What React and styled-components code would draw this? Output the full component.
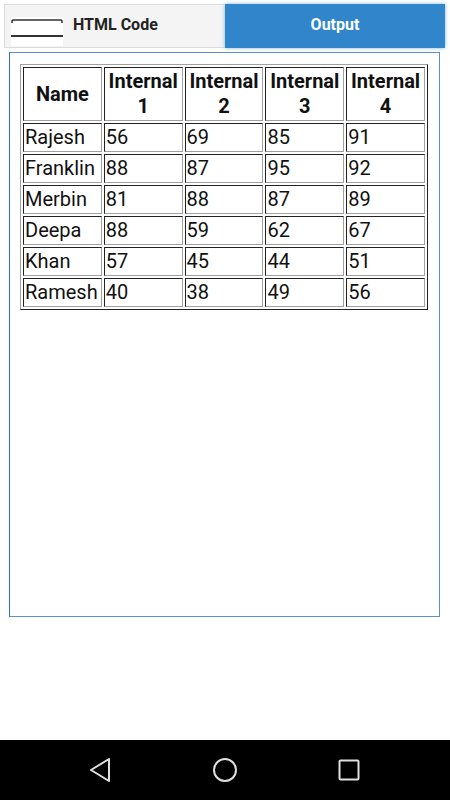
import styled, { createGlobalStyle } from "styled-components";

const GlobalStyle = createGlobalStyle`
  html, body {
    margin: 0;
    padding: 0;
    background: #ffffff;
    font-family: Roboto, "Liberation Sans", sans-serif;
  }
`;

const Screen = styled.div`
  width: 450px;
  height: 800px;
  display: flex;
  flex-direction: column;
  background: #ffffff;
  overflow: hidden;
`;

const TabBar = styled.div`
  display: flex;
  height: 44px;
  margin: 4px 5px 0 4px;
`;

const CodeTab = styled.div`
  flex: 0 0 221px;
  box-sizing: border-box;
  display: flex;
  align-items: center;
  gap: 10px;
  padding-left: 6px;
  background: #f4f4f4;
  border: 1px solid #dcdcdc;
  border-right: none;
  font-size: 16px;
  font-weight: 700;
  color: #222;
`;

const Label = styled.span`
  padding-bottom: 3px;
`;

const IconBox = styled.div`
  align-self: flex-start;
  width: 52px;
  height: 29px;
  margin-top: 12px;
  background: #ffffff;
  display: flex;
`;

const OutputTab = styled.div`
  flex: 1;
  display: flex;
  align-items: center;
  justify-content: center;
  padding-bottom: 3px;
  background: #3186cb;
  color: #ffffff;
  font-size: 16px;
  font-weight: 700;
  box-shadow: 0 0 4px rgba(49, 134, 203, 0.6);
`;

const Frame = styled.div`
  height: 565px;
  box-sizing: border-box;
  margin: 4px 10px 0 9px;
  padding: 11px 0 0 10px;
  border: 1px solid #5d8fce;
  border-left-color: #2e6fc0;
`;

const Table = styled.table`
  width: 408px;
  table-layout: fixed;
  border-spacing: 2px;
  border: 1px solid;
  border-color: #a0a0a0 #222 #222 #a0a0a0;
  font-size: 20px;
  line-height: 25px;
  color: #111;
`;

const Cell = styled.td`
  padding: 1px;
  border: 1px solid;
  border-color: #222 #a0a0a0 #a0a0a0 #222;
  text-align: ${(p) => (p.$head ? "center" : "left")};
  font-weight: ${(p) => (p.$head ? 700 : 400)};
  vertical-align: middle;
`;

const Spacer = styled.div`
  flex: 1;
`;

const NavBar = styled.div`
  height: 60px;
  background: #000;
  display: flex;
  align-items: center;
  justify-content: space-between;
  padding: 0 88px 0 87px;
`;

const rows = [
  ["Rajesh", 56, 69, 85, 91],
  ["Franklin", 88, 87, 95, 92],
  ["Merbin", 81, 88, 87, 89],
  ["Deepa", 88, 59, 62, 67],
  ["Khan", 57, 45, 44, 51],
  ["Ramesh", 40, 38, 49, 56],
];

export default function App() {
  return (
    <Screen>
      <GlobalStyle />
      <TabBar>
        <CodeTab>
          <IconBox>
            <svg width="52" height="29" viewBox="0 0 52 29">
              <path d="M1 6 V4 Q1 3 2 3 H50 Q51 3 51 4 V6" fill="none" stroke="#333" strokeWidth="1.5" />
              <line x1="0" y1="19" x2="52" y2="19" stroke="#333" strokeWidth="2" />
            </svg>
          </IconBox>
          <Label>HTML Code</Label>
        </CodeTab>
        <OutputTab>Output</OutputTab>
      </TabBar>
      <Frame>
        <Table>
          <thead>
            <tr>
              <Cell as="th" $head>Name</Cell>
              <Cell as="th" $head>Internal 1</Cell>
              <Cell as="th" $head>Internal 2</Cell>
              <Cell as="th" $head>Internal 3</Cell>
              <Cell as="th" $head>Internal 4</Cell>
            </tr>
          </thead>
          <tbody>
            {rows.map((r) => (
              <tr key={r[0]}>
                {r.map((v, i) => (
                  <Cell key={i}>{v}</Cell>
                ))}
              </tr>
            ))}
          </tbody>
        </Table>
      </Frame>
      <Spacer />
      <NavBar>
        <svg width="26" height="26" viewBox="0 0 26 26">
          <path d="M22 2 L4 13 L22 24 Z" fill="none" stroke="#e0e0e0" strokeWidth="2" strokeLinejoin="round" />
        </svg>
        <svg width="26" height="26" viewBox="0 0 26 26">
          <circle cx="13" cy="13" r="11" fill="none" stroke="#e0e0e0" strokeWidth="2" />
        </svg>
        <svg width="26" height="26" viewBox="0 0 26 26">
          <rect x="3.5" y="3.5" width="19" height="19" rx="1" fill="none" stroke="#e0e0e0" strokeWidth="2" />
        </svg>
      </NavBar>
    </Screen>
  );
}
